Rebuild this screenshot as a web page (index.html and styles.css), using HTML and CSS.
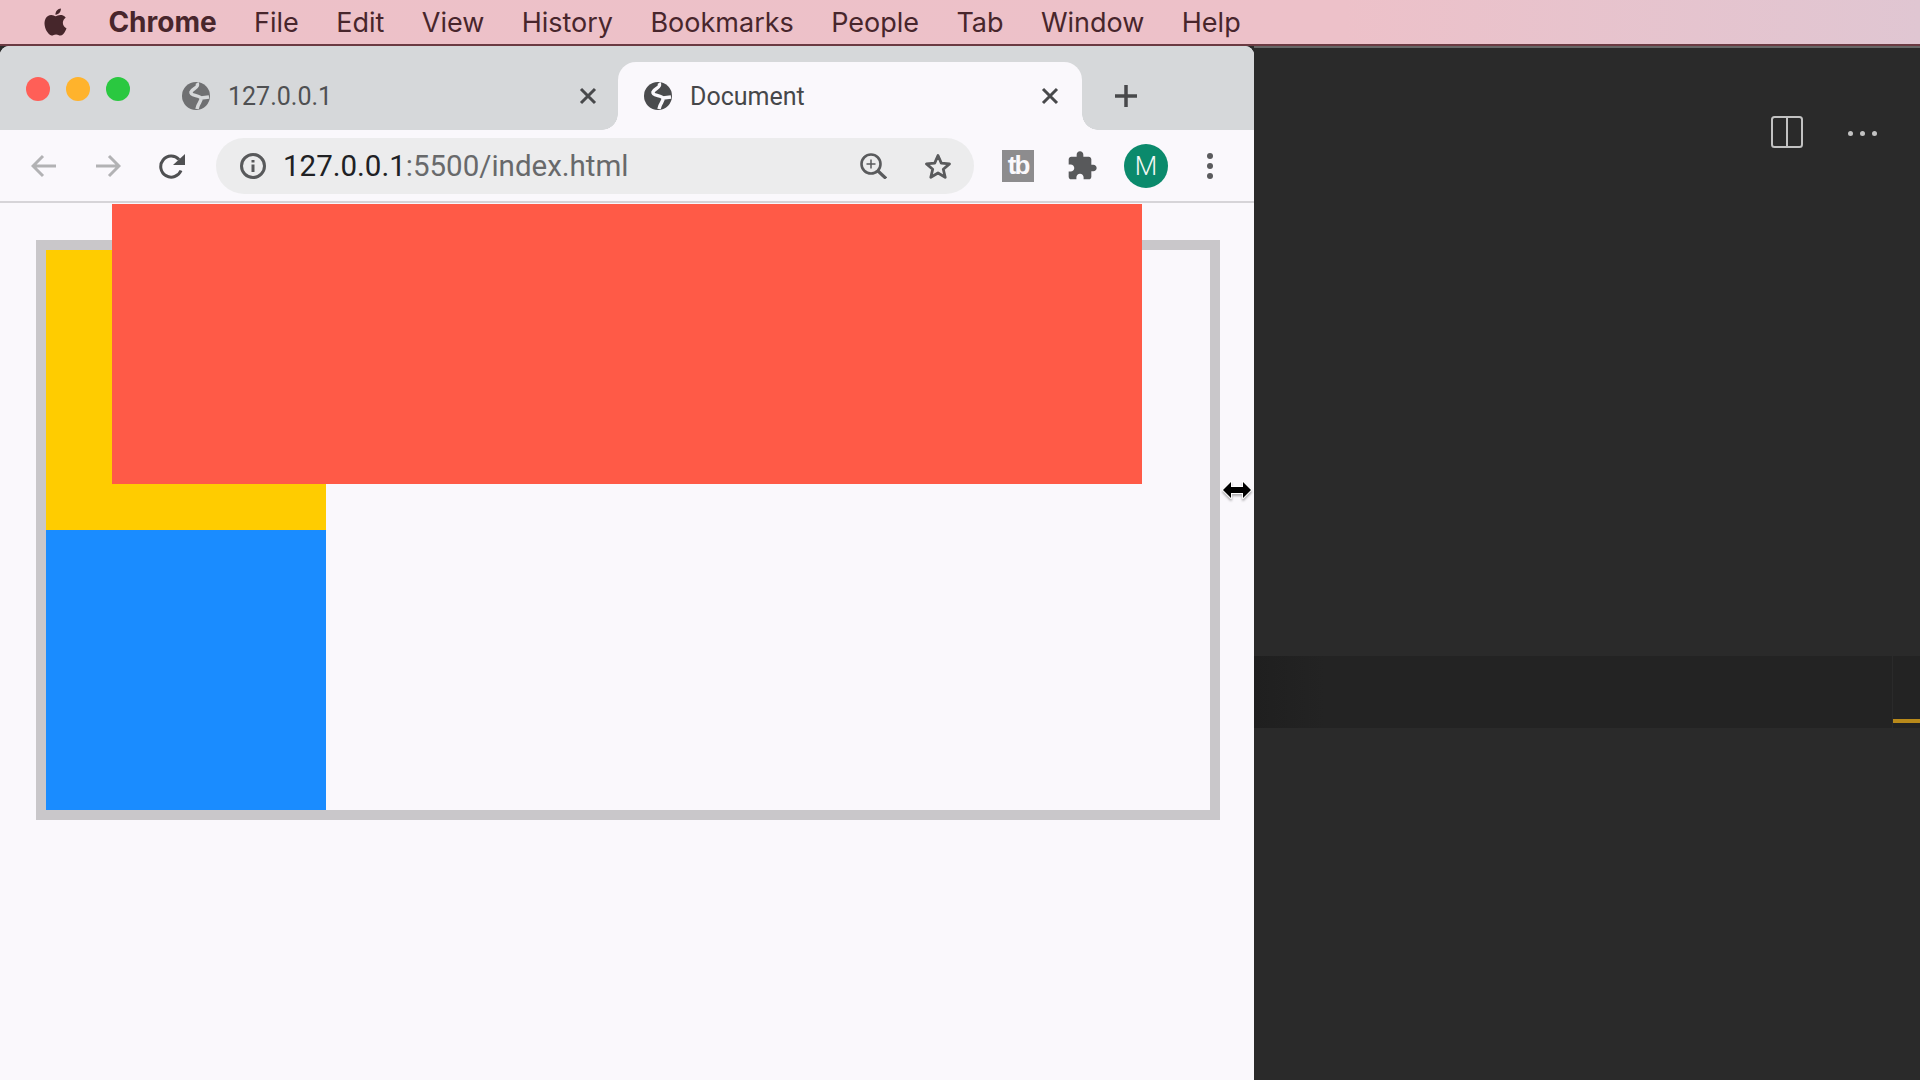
FILE: index.html
```html
<!DOCTYPE html>
<html lang="en">
<head>
<meta charset="utf-8">
<title>Document</title>
<link rel="stylesheet" href="styles.css">
</head>
<body>
<header class="menubar">
  <svg class="apple" viewBox="0 0 24 24"><path d="M12.152 6.896c-.948 0-2.415-1.078-3.96-1.04-2.04.027-3.91 1.183-4.961 3.014-2.117 3.675-.546 9.103 1.519 12.09 1.013 1.454 2.208 3.09 3.792 3.039 1.52-.065 2.09-.987 3.935-.987 1.831 0 2.35.987 3.96.948 1.637-.026 2.676-1.48 3.676-2.948 1.156-1.688 1.636-3.325 1.662-3.415-.039-.013-3.182-1.221-3.22-4.857-.026-3.04 2.48-4.494 2.597-4.559-1.429-2.09-3.623-2.324-4.39-2.376-2-.156-3.675 1.09-4.61 1.09zM15.53 3.83c.843-1.012 1.4-2.427 1.245-3.83-1.207.052-2.662.805-3.532 1.818-.78.896-1.454 2.338-1.273 3.714 1.338.104 2.715-.688 3.559-1.701"/></svg>
  <b class="menu-app">Chrome</b>
  <span>File</span><span>Edit</span><span>View</span><span>History</span><span>Bookmarks</span><span>People</span><span>Tab</span><span>Window</span><span>Help</span>
</header>
<main class="desktop">
  <section class="browser">
    <div class="tabstrip">
      <div class="lights"><i class="light red"></i><i class="light amber"></i><i class="light green"></i></div>
      <div class="tab inactive">
        <svg class="globe" viewBox="0 0 28 28"><circle cx="14" cy="14" r="14" fill="#6f7072"/><path d="M15 1C18 6 10 6 9 10C8 14 17 13 19 16C20 19 16 21 15 27M19 16L27 15" fill="none" stroke="#d6d8da" stroke-width="3.500"/></svg>
        <span class="tab-title">127.0.0.1</span>
        <svg class="close" viewBox="0 0 18 18"><path d="M2 2l14 14M16 2L2 16"/></svg>
      </div>
      <div class="tab active">
        <svg class="globe" viewBox="0 0 28 28"><circle cx="14" cy="14" r="14" fill="#4a4b4d"/><path d="M15 1C18 6 10 6 9 10C8 14 17 13 19 16C20 19 16 21 15 27M19 16L27 15" fill="none" stroke="#faf8fc" stroke-width="3.500"/></svg>
        <span class="tab-title">Document</span>
        <svg class="close" viewBox="0 0 18 18"><path d="M2 2l14 14M16 2L2 16"/></svg>
      </div>
      <svg class="plus" viewBox="0 0 24 24"><path d="M12 1v22M1 12h22"/></svg>
    </div>
    <div class="toolbar">
      <svg class="nav-icon dim" viewBox="0 0 26 24"><path d="M25 12H2M12 2L2 12l10 10"/></svg>
      <svg class="nav-icon dim" viewBox="0 0 26 24"><path d="M1 12h23M14 2l10 10-10 10"/></svg>
      <svg class="reload" viewBox="0 0 28 26"><path d="M23 17.5A10.500 10.500 0 1 1 21 6.500" fill="none" stroke="#4f5052" stroke-width="3"/><path d="M27 1v11H15z" fill="#4f5052"/></svg>
      <div class="omnibox">
        <svg class="info" viewBox="0 0 26 26"><circle cx="13" cy="13" r="11.500" fill="none" stroke="#58595b" stroke-width="3"/><path d="M11.500 11.500h3v7.500h-3zM11.500 7h3v2.600h-3z" fill="#58595b"/></svg>
        <span class="url"><span class="host">127.0.0.1</span>:5500/index.html</span>
        <svg class="zoom-icon" viewBox="0 0 27 26"><circle cx="11" cy="11" r="9.500" fill="none" stroke="#5a5b5d" stroke-width="2.600"/><path d="M18 18l8 7.500" stroke="#5a5b5d" stroke-width="3.200" fill="none"/><path d="M11 6.500v9M6.500 11h9" stroke="#5a5b5d" stroke-width="1.500" fill="none"/></svg>
        <svg class="star" viewBox="0 0 28 26"><path d="M14 2.500l3.300 7.600 8.200.8-6.200 5.400 1.900 8-7.200-4.300-7.200 4.300 1.900-8-6.200-5.400 8.200-.8z" fill="none" stroke="#5a5b5d" stroke-width="2.800" stroke-linejoin="round"/></svg>
      </div>
      <div class="tb-ext"><span>tb</span></div>
      <svg class="puzzle" viewBox="0 0 24 24"><path fill="#58595b" d="M20.500 11H19V7c0-1.100-.9-2-2-2h-4V3.500C13 2.120 11.880 1 10.500 1S8 2.120 8 3.500V5H4c-1.100 0-1.990.9-1.990 2v3.800H3.500c1.490 0 2.700 1.210 2.700 2.700s-1.210 2.700-2.700 2.700H2V20c0 1.100.9 2 2 2h3.800v-1.500c0-1.490 1.210-2.700 2.700-2.700 1.490 0 2.700 1.210 2.700 2.700V22H17c1.100 0 2-.9 2-2v-4h1.500c1.380 0 2.500-1.120 2.500-2.500S21.880 11 20.500 11z"/></svg>
      <div class="avatar">M</div>
      <div class="kebab"><i></i><i></i><i></i></div>
    </div>
    <div class="page">
      <div class="demo">
        <div class="square yellow"></div>
        <div class="square blue"></div>
        <div class="square-red"></div>
      </div>
    </div>
  </section>
  <section class="editor">
    <div class="editor-actions">
      <svg class="split" viewBox="0 0 32 32"><rect x="1" y="1" width="30" height="30" rx="2.500"/><path d="M16 1v30"/></svg>
      <div class="more"><i></i><i></i><i></i></div>
    </div>
    <div class="editor-band"><div class="band-ruler"><div class="band-mark"></div></div></div>
  </section>
  <svg class="cursor" viewBox="0 0 30 18"><path d="M1 9l8-8v5h12V1l8 8-8 8v-5H9v5z" fill="#000" stroke="#fff" stroke-width="1.800" stroke-linejoin="round" paint-order="stroke"/></svg>
</main>
</body>
</html>
```
FILE: styles.css
```css
* { box-sizing: border-box; }
html, body { height: 100%; }
body {
  margin: 0;
  width: 1920px;
  height: 1080px;
  overflow: hidden;
  display: flex;
  flex-direction: column;
  font-family: Roboto, "Liberation Sans", sans-serif;
  background: #2a2a2a;
}
.menubar {
  height: 46px;
  flex: none;
  display: flex;
  align-items: center;
  gap: 37.400px;
  padding: 0 0 0 42px;
  background: linear-gradient(90deg, #edc1c8 0%, #edc1c9 70%, #e0c6d2 100%);
  border-bottom: 2px solid #6b3a42;
  font-family: Inter, "Liberation Sans", sans-serif;
  font-size: 27px;
  color: #48262c;
}
.apple { width: 27px; height: 32px; margin-right: 2px; fill: #46262b; }
.menu-app { font-weight: 700; font-size: 28px; }
.desktop { position: relative; flex: 1; display: flex; min-height: 0; }
.browser {
  width: 1254px;
  flex: none;
  display: flex;
  flex-direction: column;
  background: #faf8fc;
  border-radius: 9px 9px 0 0;
  overflow: hidden;
}
.tabstrip {
  height: 84px;
  flex: none;
  display: flex;
  align-items: flex-end;
  background: #d6d8da;
  position: relative;
}
.lights { position: absolute; left: 26px; top: 31px; display: flex; gap: 16px; }
.light { width: 24px; height: 24px; border-radius: 50%; display: block; }
.light.red { background: #ff5f57; }
.light.amber { background: #ffb32c; }
.light.green { background: #2ac840; }
.tab {
  height: 68px;
  display: flex;
  align-items: center;
  font-size: 25px;
  flex: none;
}
.tab.inactive { width: 618px; padding-left: 182px; padding-right: 21px; color: #4f5052; }
.tab.active {
  position: relative;
  width: 464px;
  padding-left: 26px;
  padding-right: 23px;
  background: #faf8fc;
  color: #46474a;
  border-radius: 18px 18px 0 0;
}
.tab.active::before,
.tab.active::after {
  content: "";
  position: absolute;
  bottom: 0;
  width: 16px;
  height: 16px;
}
.tab.active::before { left: -16px; background: radial-gradient(circle at 0 0, transparent 15.500px, #faf8fc 16px); }
.tab.active::after { right: -16px; background: radial-gradient(circle at 100% 0, transparent 15.500px, #faf8fc 16px); }
.globe { width: 28px; height: 28px; flex: none; margin-right: 18px; }
.tab-title { flex: 1; }
.close { width: 18px; height: 18px; fill: none; stroke: #48494b; stroke-width: 3; flex: none; }
.plus { width: 24px; height: 24px; margin: 0 0 22px 32px; fill: none; stroke: #48494b; stroke-width: 3.500; flex: none; }
.toolbar {
  height: 73px;
  flex: none;
  display: flex;
  align-items: center;
  padding-left: 31px;
  border-bottom: 2px solid #d6d4d8;
}
.nav-icon { width: 26px; height: 24px; flex: none; margin-right: 38px; fill: none; stroke: #b2b2b4; stroke-width: 3; }
.reload { width: 28px; height: 26px; flex: none; margin-left: -1px; margin-right: 30px; }
.omnibox {
  width: 758px;
  height: 56px;
  flex: none;
  display: flex;
  align-items: center;
  padding-left: 24px;
  border-radius: 28px;
  background: #ececed;
  font-size: 29.500px;
  color: #68696b;
}
.info { width: 26px; height: 26px; flex: none; margin-right: 17px; }
.url { flex: 1; white-space: nowrap; }
.host { color: #202124; }
.zoom-icon { width: 27px; height: 26px; flex: none; margin-right: 37px; }
.star { width: 28px; height: 26px; flex: none; margin-right: 22px; }
.tb-ext {
  width: 32px;
  height: 32px;
  flex: none;
  margin-left: 28px;
  margin-right: 32px;
  display: flex;
  align-items: center;
  justify-content: center;
  background: #8d8c8e;
  color: #faf8fc;
  font-family: "Liberation Sans", sans-serif;
  font-size: 26px;
  font-weight: 700;
  letter-spacing: -2px;
}
.puzzle { width: 32px; height: 32px; flex: none; margin-right: 26px; }
.avatar {
  width: 44px;
  height: 44px;
  flex: none;
  border-radius: 50%;
  background: #0b8a6c;
  color: #f4f8f6;
  font-size: 26px;
  font-weight: 300;
  display: flex;
  align-items: center;
  justify-content: center;
}
.kebab { margin-left: 39px; display: flex; flex-direction: column; gap: 4px; flex: none; }
.kebab i { width: 6px; height: 6px; border-radius: 50%; background: #5a5b5d; display: block; }
.page { flex: 1; padding: 37px 34px 0 36px; }
.demo {
  position: relative;
  height: 580px;
  border: 10px solid #c9c7ca;
}
.square { width: 280px; height: 280px; }
.yellow { background: #ffcc00; }
.blue { background: #1a8cff; }
.square-red {
  position: absolute;
  left: 66px;
  top: -46px;
  width: 1030px;
  height: 280px;
  background: #ff5a47;
}
.editor { flex: 1; display: flex; flex-direction: column; background: #2a2a2a; border-top: 2px solid #666; }
.editor-actions {
  height: 608px;
  flex: none;
  display: flex;
  justify-content: flex-end;
  align-items: flex-start;
  padding: 68px 43px 0 0;
}
.split { width: 32px; height: 32px; fill: none; stroke: #c2c2c2; stroke-width: 2; margin-right: 45px; }
.more { display: flex; gap: 7px; margin-top: 15px; }
.more i { width: 5px; height: 5px; border-radius: 50%; background: #c2c2c2; display: block; }
.editor-band {
  height: 72px;
  flex: none;
  display: flex;
  justify-content: flex-end;
  background: linear-gradient(90deg, #1f1f1f 0, #232323 70px);
}
.band-ruler {
  width: 28px;
  display: flex;
  align-items: flex-end;
  border-left: 1px solid #2a2a2a;
}
.band-mark { width: 100%; height: 4px; margin-bottom: 5px; background: #b8891a; }
.cursor { position: absolute; left: 1222px; top: 435px; width: 30px; height: 18px; filter: drop-shadow(0 2px 1px rgba(0, 0, 0, 0.3)); }
```
